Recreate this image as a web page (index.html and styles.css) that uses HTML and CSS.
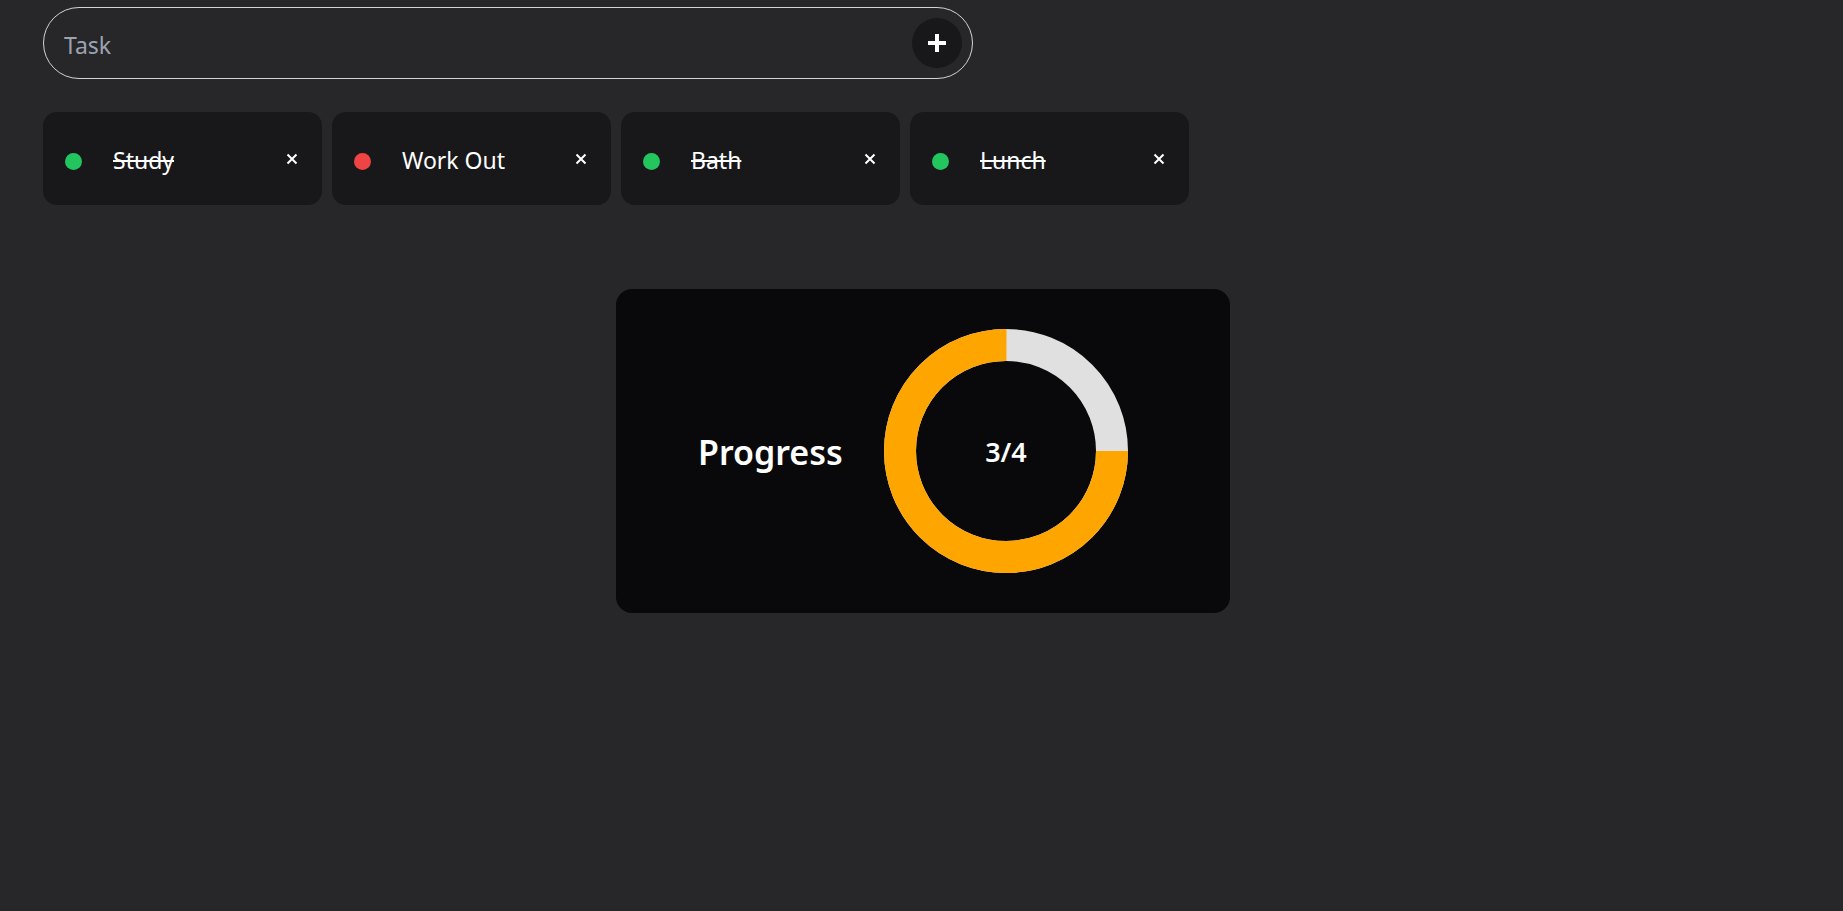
FILE: index.html
```html
<!DOCTYPE html>
<html lang="en">
<head>
<meta charset="utf-8">
<title>Tasks</title>
<link rel="stylesheet" href="styles.css">
</head>
<body>
<main class="app">
  <form class="task-form">
    <input class="task-input" type="text" placeholder="Task">
    <button class="add-btn" type="button" aria-label="Add">
      <svg width="20" height="20" viewBox="0 0 20 20"><path d="M10 1v18M1 10h18" stroke="#fff" stroke-width="4" fill="none"/></svg>
    </button>
  </form>

  <ul class="task-list">
    <li class="task done">
      <span class="dot green"></span>
      <span class="task-name">Study</span>
      <button class="remove" type="button" aria-label="Remove"><svg width="12" height="12" viewBox="0 0 12 12"><path d="M1.5 1.5l9 9M10.5 1.5l-9 9" stroke="#fff" stroke-width="2" fill="none"/></svg></button>
    </li>
    <li class="task">
      <span class="dot red"></span>
      <span class="task-name">Work Out</span>
      <button class="remove" type="button" aria-label="Remove"><svg width="12" height="12" viewBox="0 0 12 12"><path d="M1.5 1.5l9 9M10.5 1.5l-9 9" stroke="#fff" stroke-width="2" fill="none"/></svg></button>
    </li>
    <li class="task done">
      <span class="dot green"></span>
      <span class="task-name">Bath</span>
      <button class="remove" type="button" aria-label="Remove"><svg width="12" height="12" viewBox="0 0 12 12"><path d="M1.5 1.5l9 9M10.5 1.5l-9 9" stroke="#fff" stroke-width="2" fill="none"/></svg></button>
    </li>
    <li class="task done">
      <span class="dot green"></span>
      <span class="task-name">Lunch</span>
      <button class="remove" type="button" aria-label="Remove"><svg width="12" height="12" viewBox="0 0 12 12"><path d="M1.5 1.5l9 9M10.5 1.5l-9 9" stroke="#fff" stroke-width="2" fill="none"/></svg></button>
    </li>
  </ul>

  <section class="progress-card">
    <h2 class="progress-title">Progress</h2>
    <div class="donut">
      <svg class="donut-svg" width="244" height="244" viewBox="0 0 244 244">
        <circle cx="122" cy="122" r="106" fill="none" stroke="#e0e0e0" stroke-width="32"/>
        <circle cx="122" cy="122" r="106" fill="none" stroke="#ffa500" stroke-width="32" stroke-dasharray="499.5 700"/>
      </svg>
      <span class="donut-label">3/4</span>
    </div>
  </section>
</main>
</body>
</html>
```

FILE: styles.css
```css
* { box-sizing: border-box; }

html, body {
  margin: 0;
  background: #27272a;
}

body {
  font-family: "Noto Sans", "Open Sans", Arial, sans-serif;
  color: #ffffff;
  padding: 7px 40px 0 43px;
}

.app {
  display: flex;
  flex-direction: column;
}

.task-form {
  width: 930px;
  height: 72px;
  border: 1px solid #d4d4d8;
  border-radius: 36px;
  display: flex;
  align-items: center;
  padding: 0 10px 0 20px;
  margin: 0;
}

.task-input {
  flex: 1;
  background: transparent;
  border: none;
  outline: none;
  color: #fff;
  font-family: inherit;
  font-size: 23px;
  padding: 4px 0 0;
}
.task-input::placeholder { color: #9ca3af; }

.add-btn {
  width: 50px;
  height: 50px;
  border-radius: 50%;
  border: none;
  background: #18181b;
  display: flex;
  align-items: center;
  justify-content: center;
  padding: 0;
}

.task-list {
  list-style: none;
  margin: 33px 0 0;
  padding: 0;
  display: flex;
  gap: 10px;
}

.task {
  width: 279px;
  height: 93px;
  background: #18181b;
  border-radius: 14px;
  display: flex;
  align-items: center;
  padding: 0 24px 0 22px;
}

.dot {
  width: 17px;
  height: 17px;
  border-radius: 50%;
  margin-top: 6px;
  flex: none;
}
.dot.green { background: #22c55e; }
.dot.red { background: #ef4444; }

.task-name {
  flex: 1;
  margin-left: 31px;
  padding-top: 3px;
  font-size: 23px;
  line-height: 1;
}
.task.done .task-name { text-decoration: line-through; }

.remove {
  background: none;
  border: none;
  padding: 0;
  display: flex;
}

.progress-card {
  margin: 84px auto 0;
  width: 614px;
  height: 324px;
  background: #09090b;
  border-radius: 16px;
  display: flex;
  align-items: center;
  padding: 40px 0 40px 82px;
}

.progress-title {
  margin: 0;
  width: 186px;
  padding-top: 2px;
  font-size: 34px;
  font-weight: 600;
  line-height: 1;
}

.donut {
  display: grid;
  place-items: center;
  width: 244px;
  height: 244px;
}
.donut-svg, .donut-label { grid-area: 1 / 1; }
.donut-label {
  font-size: 27px;
  font-weight: 600;
}
```
